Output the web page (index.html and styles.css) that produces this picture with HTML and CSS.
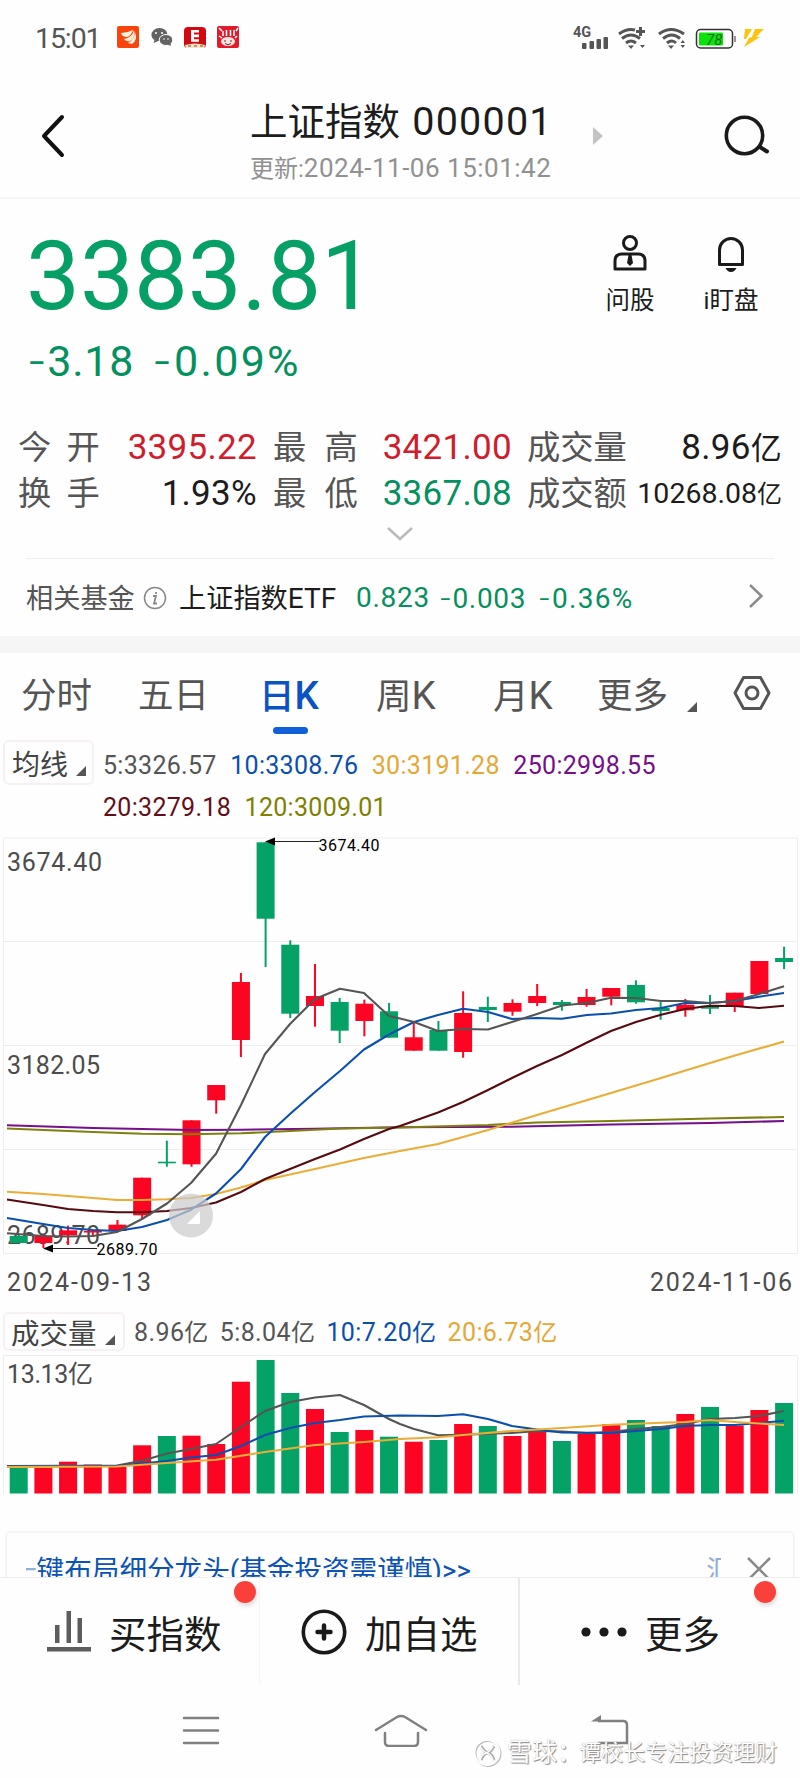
FILE: index.html
```html
<!DOCTYPE html>
<html lang="zh-CN">
<head>
    <meta charset="UTF-8">
    <title>上证指数 000001</title>
    <link rel="stylesheet" href="styles.css">
</head>
<body>
<div class="status">
    <span class="time">15:01</span>
    <svg class="apps" width="124" height="26" viewBox="116 25 124 26">
        <rect x="117" y="26" width="22" height="22" rx="2" fill="#f9440e"/>
        <path d="M121 33q6 0 12-3q-2 6-6 7q-5 0-6-4zM124 39q8-1 10-9q2 7-4 11q-4 1-6-2zM128 43q7-4 7-11q3 8-3 12z" fill="#fff3dc"/>
        <path d="M151.500 35a8 6.500 0 1 1 7 6l-5 2 1-3a7 6 0 0 1-3-5z" fill="#636363"/>
        <ellipse cx="166" cy="40" rx="6.800" ry="5.500" fill="#636363" stroke="#fff"/>
        <path d="M167 44l4 2-.5-3z" fill="#636363"/>
        <g fill="#fff"><circle cx="156" cy="33" r="1"/><circle cx="162" cy="33" r="1"/><circle cx="164" cy="39" r=".8"/><circle cx="168" cy="39" r=".8"/></g>
        <rect x="184" y="27" width="22" height="21" rx="4" fill="#d3090f"/>
        <path d="M191 30h8v2.600h-5v2h5v2.600h-5v2h5v2.600h-8z" fill="#fff"/>
        <path d="M185 45q10-3 20 0l-1 3h-18z" fill="#f7e3c4"/>
        <path d="M188 46h3M194 46h3M200 46h3" stroke="#7a4a2a"/>
        <rect x="217" y="26" width="22" height="22" rx="2" fill="#e01b2c"/>
        <path d="M223 31v5M226.500 30v6M230.500 30v6M234 30v6M219 28l3 3M238 28l-2 3M219 36l3 2M237 36l-2 2" stroke="#fff" stroke-width="1.500"/>
        <ellipse cx="228" cy="41.500" rx="7" ry="4.500" fill="#fbe3df"/>
        <path d="M224 41h2M230 41h2M225 43.500q3 2.500 6 0" stroke="#8a2020" fill="none"/>
    </svg>
    <svg class="signals" width="196" height="26" viewBox="570 25 196 26">
        <text class="net" x="573" y="37">4G</text>
        <g fill="#555">
            <rect x="582" y="43" width="4.500" height="6" rx="1"/><rect x="589.500" y="41" width="4.500" height="8" rx="1"/>
            <rect x="596.500" y="39" width="4.500" height="10" rx="1"/><rect x="603.500" y="37" width="4.500" height="12" rx="1"/>
            <path d="M628 45.500h6l-3 3.500zM668 45.500h6l-3 3.500zM640 45h5l-2.500 3zM680.500 43h4.500l-2.200-3zM680.500 45h4.500l-2.200 3z"/>
        </g>
        <g fill="none" stroke="#555" stroke-width="3">
            <path d="M619 34q8-6 16-4M622 38.500q9-7 18 0M626 43q5-4 10 0M636 31.500h9M640.500 27v9"/>
            <path d="M659 34q12-9 25 0M663 38.500q9-7 17 0M667 43q5-4 9 0"/>
        </g>
        <rect x="696.500" y="29.500" width="36" height="18.500" rx="4" fill="#fff" stroke="#333" stroke-width="1.500"/>
        <rect x="699" y="32.500" width="24" height="13" rx="1" fill="#0be30b"/>
        <path d="M735 36v6" stroke="#777" stroke-width="1.500"/>
        <text class="bat" x="706" y="45">78</text>
        <path d="M745 29h7l-6 10h-2zM755 29h9l-8 8h4l-16 10 5-9 3-1z" fill="#fcc40c"/>
    </svg>
</div>

<div class="header">
    <svg class="back" width="26" height="44" viewBox="0 0 26 44"><path d="M22 3L4 22l18 19" fill="none" stroke="#111" stroke-width="4" stroke-linecap="round" stroke-linejoin="round"/></svg>
    <div class="title">
        <h1>上证指数 <span>000001</span></h1>
        <p>更新:<span>2024-11-06 15:01:42</span></p>
    </div>
    <svg class="next" width="10" height="18" viewBox="0 0 10 18"><path d="M0 0l10 9-10 9z" fill="#c4c4c4"/></svg>
    <svg class="search" width="46" height="42" viewBox="0 0 46 42"><circle cx="20.500" cy="20.500" r="18.200" fill="none" stroke="#1a1a1a" stroke-width="3.600"/><path d="M36 32l7 4.500" stroke="#1a1a1a" stroke-width="4" stroke-linecap="round"/></svg>
</div>

<div class="quote">
    <div class="top">
        <div class="price">
            <div class="now">3383.81</div>
            <div class="change"><span><i>-</i>3.18</span><span class="pct"><i>-</i>0.09%</span></div>
        </div>
        <div class="act">
            <svg width="36" height="40" viewBox="0 0 36 40" fill="none" stroke="#1a1a1a" stroke-width="3"><circle cx="18" cy="9" r="6.500"/><path d="M3 35V27q0-7 7-7h16q7 0 7 7v8z" stroke-linejoin="round"/><path d="M16.500 21h3l1.500 8-3 3-3-3z" fill="#1a1a1a" stroke="none"/></svg>
            <span>问股</span>
        </div>
        <div class="act">
            <svg width="36" height="40" viewBox="0 0 36 40" fill="none" stroke="#1a1a1a" stroke-width="3"><path d="M6.500 30.500V16a11.500 11.500 0 0 1 23 0v14.500z" stroke-linejoin="round"/><path d="M12.500 34h11q-2 4-5.500 4t-5.500-4z" fill="#1a1a1a" stroke="none"/></svg>
            <span>i盯盘</span>
        </div>
    </div>
    <div class="stats">
        <span class="lab">今 开</span><span class="val red">3395.22</span>
        <span class="lab wide">最 高</span><span class="val red">3421.00</span>
        <span class="lab">成交量</span><span class="val">8.96<b>亿</b></span>
        <span class="lab">换 手</span><span class="val">1.93%</span>
        <span class="lab wide">最 低</span><span class="val green">3367.08</span>
        <span class="lab">成交额</span><span class="val small">10268.08<b>亿</b></span>
    </div>
    <svg class="more" width="28" height="16" viewBox="0 0 28 16"><path d="M2 2l12 11L26 2" fill="none" stroke="#bbb" stroke-width="2.500"/></svg>
    <div class="fund">
        <span class="key">相关基金</span>
        <svg width="24" height="24" viewBox="0 0 24 24"><circle cx="12" cy="12" r="10.500" fill="none" stroke="#888" stroke-width="1.500"/><path d="M10 10h3l-2 7.500h3M13 6v2" fill="none" stroke="#888" stroke-width="1.800"/></svg>
        <span class="name">上证指数<b>ETF</b></span>
        <span class="f1">0.823</span><span class="f2"><i>-</i>0.003</span><span class="f3"><i>-</i>0.36%</span>
        <svg class="go" width="16" height="26" viewBox="0 0 16 26"><path d="M2 2l11.500 11L2 24" fill="none" stroke="#8c8c8c" stroke-width="2.500"/></svg>
    </div>
</div>

<div class="tabs">
    <span>分时</span><span>五日</span><span class="on">日<b>K</b></span><span>周<b>K</b></span><span>月<b>K</b></span><span>更多</span>
    <svg class="tri" width="10" height="10" viewBox="0 0 10 10"><path d="M10 0v10H0z" fill="#555"/></svg>
    <svg class="set" width="38" height="36" viewBox="0 0 38 36" fill="none" stroke="#555" stroke-width="3"><path d="M10.500 2.500h17L36 18l-8.500 15.500h-17L2 18z" stroke-linejoin="round"/><circle cx="19" cy="18" r="6"/></svg>
</div>

<div class="ma">
    <div class="pick">均线<svg width="10" height="10" viewBox="0 0 10 10"><path d="M10 0v10H0z" fill="#555"/></svg></div>
    <div>
        <div class="vals"><span class="c5">5:3326.57</span><span class="c10">10:3308.76</span><span class="c30">30:3191.28</span><span class="c250">250:2998.55</span></div>
        <div class="vals"><span class="c20">20:3279.18</span><span class="c120">120:3009.01</span></div>
    </div>
</div>

<svg class="kline" id="kline" width="800" height="474" viewBox="0 830 800 474"></svg>

<div class="ma vol">
    <div class="pick">成交量<svg width="10" height="10" viewBox="0 0 10 10"><path d="M10 0v10H0z" fill="#555"/></svg></div>
    <div class="vals">
        <span class="c5">8.96<b>亿</b></span><span class="c5">5:8.04<b>亿</b></span><span class="c10">10:7.20<b>亿</b></span><span class="c30">20:6.73<b>亿</b></span>
    </div>
</div>

<svg class="volume" id="volume" width="800" height="143" viewBox="0 1353 800 143"></svg>

<div class="promo">
    <div class="scroll"><span class="txt"><em>一</em>键布局细分龙头(基金投资需谨慎)&gt;&gt;</span><span class="tail">汇</span></div>
    <svg width="26" height="26" viewBox="0 0 26 26"><path d="M2 2l22 22M24 2L2 24" stroke="#8a8a8a" stroke-width="2.500"/></svg>
</div>

<div class="bar">
    <div class="buy">
        <svg width="46" height="42" viewBox="0 0 46 42" fill="#5c5c5c"><rect x="9" y="14" width="4.500" height="18"/><rect x="20.500" y="0" width="4.500" height="32"/><rect x="31.500" y="7" width="4.500" height="25"/><rect x="1" y="36" width="44" height="4.500"/></svg>
        <span>买指数</span><i class="dot"></i>
    </div>
    <div class="add">
        <svg width="46" height="46" viewBox="0 0 46 46" fill="none" stroke="#1a1a1a" stroke-linecap="round"><circle cx="23" cy="23" r="20.700" stroke-width="3.600"/><path d="M23 16.500v13M16.500 23h13" stroke-width="4.500"/></svg>
        <span>加自选</span>
    </div>
    <div class="etc">
        <svg width="46" height="10" viewBox="0 0 46 10" fill="#1a1a1a"><circle cx="5" cy="5" r="4.600"/><circle cx="23" cy="5" r="4.600"/><circle cx="41" cy="5" r="4.600"/></svg>
        <span>更多</span><i class="dot"></i>
    </div>
</div>

<div class="nav">
    <svg width="38" height="30" viewBox="0 0 38 30" stroke="#808080" stroke-width="2.500" stroke-linecap="round"><path d="M2 2h34M2 14.500h34M2 27h34"/></svg>
    <svg width="54" height="34" viewBox="0 0 54 34" fill="none" stroke="#808080" stroke-width="2.500" stroke-linecap="round"><path d="M2 17L23 4q4-2 8 0l21 13M11 20v9q0 4 4 4h25q4 0 4-4v-9"/></svg>
    <svg width="40" height="32" viewBox="0 0 40 32" fill="none" stroke="#808080" stroke-width="2.500"><path d="M8 7h25q4 0 4 4v18H8"/><path d="M1 7.500L11 1v6.500z" fill="#808080" stroke="none"/></svg>
    <div class="mark">
        <svg width="30" height="30" viewBox="0 0 30 30" fill="none"><circle cx="15" cy="15.500" r="12.500" stroke="#bbb" stroke-width="2"/><circle cx="14" cy="14.500" r="12.500" stroke="#fff" stroke-width="2"/><path d="M8 8q3 6 7 7t6 7M21 8q-3 6-7 7t-6 7" stroke="#aaa" stroke-width="3"/><path d="M7 8q3 6 7 7t6 7M20 8q-3 6-7 7t-6 7" stroke="#fff" stroke-width="1.500"/></svg>
        <span class="site">雪球：</span><span>谭校长专注投资理财</span>
    </div>
</div>
<script src="chart.js"></script>
</body>
</html>
```
FILE: styles.css
```css
*{
    box-sizing: border-box;
}
body{
    margin: 0;
    width: 800px;
    height: 1778px;
    overflow: hidden;
    background-color: #fefefe;
    color: #1c1c1c;
    font-family: Roboto,"Noto Sans CJK SC",sans-serif;
}
svg{
    display: block;
    flex-shrink: 0;
}
i,em{
    font-style: normal;
}
b{
    font-weight: normal;
}
.status{
    height: 76px;
    display: flex;
    align-items: center;
    padding-left: 35px;
}
.time{
    font-size: 28.5px;
    letter-spacing: -1.1px;
    color: #555;
    width: 81px;
}
.signals{
    margin-left: 330px;
}
.net{
    font-size: 14.5px;
    font-weight: bold;
    fill: #555;
}
.bat{
    font-size: 15px;
    font-style: italic;
    fill: #146b14;
}
.header{
    height: 123px;
    display: flex;
    border-bottom: 2px solid #f5f5f5;
}
.back{
    margin: 38px 0 0 40px;
}
.title{
    margin-left: 184px;
    width: 343px;
}
h1{
    margin: 0;
    padding-top: 22px;
    font-size: 37.5px;
    font-weight: normal;
    line-height: 48px;
    word-spacing: 3px;
}
h1 span{
    font-size: 39.5px;
    letter-spacing: 1.2px;
}
.title p{
    margin: 0;
    font-size: 24px;
    line-height: 44px;
    color: #919191;
}
.title p span{
    font-size: 26px;
    letter-spacing: .5px;
}
.next{
    margin-top: 51px;
}
.search{
    margin: 39px 0 0 121px;
}
.quote{
    height: 454px;
    border-bottom: 17px solid #f6f6f6;
}
.top{
    display: flex;
    height: 226px;
}
.price{
    width: 569px;
    padding: 27px 0 0 26px;
    color: #06a066;
}
.now{
    font-size: 96px;
    line-height: 100px;
}
.change{
    display: flex;
    gap: 18px;
    padding-left: 1px;
    margin-top: 7px;
    font-size: 43px;
    line-height: 54px;
    letter-spacing: .8px;
    color: #04905f;
}
.pct{
    letter-spacing: 2.3px;
}
.change i,.fund i{
    font-family: Inter,sans-serif;
    font-weight: 300;
}
.act{
    width: 100px;
    margin-right: 1px;
    padding-top: 35px;
}
.act svg{
    margin-left: 32px;
}
.act span{
    display: block;
    margin-top: 12px;
    text-align: center;
    font-size: 24.5px;
    line-height: 30px;
}
.act:nth-child(2){
    margin-left: 11px;
}
.stats{
    display: grid;
    grid-template-columns: 90px 149px 98px 157px 110px 160px;
    grid-auto-rows: 46px;
    padding-left: 18px;
    line-height: 46px;
}
.lab{
    font-size: 33.3px;
    color: #555;
    word-spacing: 7px;
    white-space: nowrap;
}
.lab:nth-child(6n+3){
    padding-left: 16px;
}
.lab:nth-child(6n+5){
    padding-left: 15px;
}
.wide{
    word-spacing: 10px;
}
.val{
    font-size: 35px;
    text-align: right;
    letter-spacing: .3px;
    white-space: nowrap;
}
.val b{
    font-size: 31px;
}
.small{
    font-size: 28.5px;
    letter-spacing: 0;
}
.small b{
    font-size: 25px;
}
.red{
    color: #cf1d2d;
}
.green{
    color: #04905f;
}
.more{
    margin: 9px auto 0;
}
.fund{
    display: flex;
    align-items: center;
    height: 78px;
    margin: 16px 26px 0;
    border-top: 1px solid #eee;
    font-size: 27.2px;
    color: #04905f;
}
.key{
    color: #555;
    width: 117px;
    margin-bottom: 4px;
}
.name{
    color: #1c1c1c;
    margin: 0 0 4px 12px;
    width: 177px;
}
.name b,.f1,.f2,.f3{
    font-size: 28px;
}
.f1,.f2,.f3{
    letter-spacing: .7px;
}
.f1{
    width: 83px;
}
.f2{
    width: 99px;
}
.f3{
    letter-spacing: 1.3px;
}
.go{
    margin: 0 10px 3px auto;
}
.tabs{
    display: flex;
    height: 86px;
    padding-left: 21px;
    font-size: 35.5px;
    line-height: 86px;
    color: #555;
}
.tabs span{
    width: 117px;
    white-space: nowrap;
}
.tabs b{
    font-size: 38.5px;
}
.tabs span:nth-child(2){
    width: 121px;
}
.tabs .on{
    color: #0b53c4;
    font-weight: 500;
    width: 117px;
    position: relative;
}
.on b{
    font-weight: 500;
}
.tabs .on::after{
    content: "";
    position: absolute;
    left: 14px;
    top: 74px;
    width: 35px;
    height: 7px;
    border-radius: 4px;
    background-color: #1160d8;
}
.tabs span:nth-child(5){
    width: 104px;
}
.tabs span:nth-child(6){
    width: 90px;
}
.tri{
    margin-top: 49px;
}
.set{
    margin: 22px 0 0 36px;
}
.ma{
    display: flex;
    height: 91px;
    padding-left: 3px;
}
.pick{
    display: flex;
    align-items: center;
    width: 91px;
    height: 45px;
    margin-top: 1px;
    padding-left: 7px;
    border: 2px solid #f6f2f4;
    border-radius: 6px;
    font-size: 28px;
    color: #444;
    white-space: nowrap;
}
.pick svg{
    margin: 17px 0 0 8px;
}
.vals{
    display: flex;
    gap: 13.5px;
    padding: 6px 0 0 9px;
    font-size: 25px;
    line-height: 42px;
    letter-spacing: .3px;
    white-space: nowrap;
}
.vals + .vals{
    padding-top: 0;
}
.c5{
    color: #555;
}
.c10{
    color: #0b4fae;
}
.c30{
    color: #e5a836;
}
.c250{
    color: #75108a;
}
.c20{
    color: #640f18;
}
.c120{
    color: #808000;
}
.vol{
    height: 41px;
    margin-top: 7px;
}
.vol .pick{
    width: 122px;
    height: 39px;
    font-size: 28.5px;
    padding-left: 6px;
}
.vol .vals{
    gap: 11px;
    padding: 1px 0 0 9px;
    letter-spacing: .4px;
}
.vol b{
    font-size: 24px;
}
.volume{
    margin-top: 1px;
}
.axis{
    font-size: 25px;
    fill: #4c4c4c;
}
.peak{
    font-size: 16px;
    fill: #000;
}
.promo{
    display: flex;
    justify-content: space-between;
    height: 46px;
    margin: 35px 5px 0;
    padding: 23px 21px 0 19px;
    overflow: hidden;
    border: 2px solid #f5f5f5;
    border-bottom: 0;
    border-radius: 6px 6px 0 0;
    color: #0b53b4;
}
.scroll{
    display: flex;
    justify-content: space-between;
    width: 695px;
    overflow: hidden;
    font-size: 27.6px;
    line-height: 30px;
    white-space: nowrap;
}
.txt{
    margin-left: -17px;
}
.scroll em{
    opacity: .45;
}
.tail{
    width: 15px;
    overflow: hidden;
    opacity: .45;
}
.bar{
    display: flex;
    height: 107px;
    border-top: 1px solid #eee;
}
.bar div{
    display: flex;
    align-items: center;
    position: relative;
    width: 260px;
    height: 107px;
    font-size: 37.5px;
    border-right: 1px solid #f5f5f5;
}
.bar .buy{
    padding-left: 46px;
}
.bar .buy span{
    margin-left: 17px;
}
.bar .add{
    padding-left: 41px;
    border-right: 2px solid #eaeaea;
}
.bar .add span{
    margin-left: 18px;
}
.bar .etc{
    width: 280px;
    padding-left: 61px;
    border-right: 0;
}
.bar .etc span{
    margin-left: 18px;
}
.dot{
    position: absolute;
    right: 3px;
    top: 3px;
    width: 22px;
    height: 22px;
    border-radius: 50%;
    background-color: #f9403b;
    box-shadow: 1px 3px 4px #ddd;
}
.etc .dot{
    right: 24px;
}
.nav{
    position: relative;
    display: flex;
    height: 93px;
    padding: 32px 0 0 182px;
}
.nav > svg:nth-child(2){
    margin: -3px 0 0 154px;
}
.nav > svg:nth-child(3){
    margin: -2px 0 0 162px;
}
.mark{
    position: absolute;
    left: 473px;
    top: 52px;
    display: flex;
    align-items: center;
    font-size: 22px;
    line-height: 34px;
    color: #fff;
    text-shadow: 1px 1px 1px #888,0 0 1px #aaa;
    white-space: nowrap;
}
.site{
    font-size: 25px;
    margin-left: 4px;
    width: 72px;
}
```
FILE: chart.js
```js
var NS="http://www.w3.org/2000/svg";
var RED="#fb0523",GREEN="#04a267";
var step=24.69,first=18.7;

function draw(box,name,attr,text){
    var el=document.createElementNS(NS,name);
    for(var k in attr){
        el.setAttribute(k,attr[k]);
    }
    if(text){
        el.textContent=text;
    }
    box.appendChild(el);
}
function line(box,color,points){
    draw(box,"polyline",{points:points,fill:"none",stroke:color,"stroke-width":2.1,"stroke-linejoin":"round"});
}
function label(box,cls,x,y,len,text){
    draw(box,"text",{"class":cls,x:x,y:y,textLength:len},text);
}

//K线
var kline=document.getElementById("kline");
//颜色,最高,实体上,实体下,最低
var days=[
    ["g",1235,1236,1243,1243],["r",1235,1236,1243,1248],["r",1225.6,1230.3,1235.3,1245],["r",1230,1231,1232.5,1237],
    ["r",1220,1224.7,1231,1231],["r",1177.7,1177.7,1215.3,1219],["g",1140.7,1161.7,1163.3,1166.7],["r",1120.3,1120.3,1164.3,1166.7],
    ["r",1085,1085,1100.3,1113.7],["r",973,982,1040,1057],["g",842.3,842.3,918.7,967],["g",940.3,944.7,1013.7,1018],
    ["r",964,996,1006,1026.7],["g",998,1002,1030.7,1043],["r",999.7,1003.7,1021,1036.3],["g",1003,1011.3,1037.7,1037.7],
    ["r",1022.7,1037.3,1050.7,1050.7],["g",1021,1030,1050.7,1050.7],["r",991.3,1013,1052,1057.7],["g",996.7,1007,1010,1022],
    ["r",999.3,1003,1011.7,1015.7],["r",984,996,1003,1006],["g",1000,1002,1005,1010.7],["r",989,997,1005,1006.7],
    ["r",988,988,996.7,1005.3],["g",980.3,985,1002.3,1003.7],["g",1001.7,1008,1011,1019.7],["r",999,1004.7,1010.3,1016.7],
    ["g",995,1005.7,1008.7,1014],["r",992.7,992.7,1006,1012],["r",961,961,994,994],["g",946.7,958,962,969]
];
draw(kline,"rect",{x:3.5,y:838,width:794,height:415.5,fill:"none",stroke:"#eee"});
[941.5,1045.5,1149.5].forEach(function(y){
    draw(kline,"path",{d:"M4 "+y+"H797",stroke:"#eee"});
});
label(kline,"axis",7,871,95,"3674.40");
label(kline,"axis",7,1074,93,"3182.05");
label(kline,"axis",7,1244,93,"2689.70");
for(var i=0;i<days.length;i++){
    var d=days[i],x=first+i*step,c=d[0]=="r"?RED:GREEN;
    draw(kline,"rect",{x:x-1,y:d[1],width:2,height:d[4]-d[1],fill:c});
    draw(kline,"rect",{x:x-9,y:d[2],width:18,height:d[3]-d[2],fill:c});
}
line(kline,"#75108a","7,1125.3 93,1128 191,1130 241,1129.7 315,1128.7 400,1127.3 512,1126.7 611,1124.5 710,1123 784,1121");
line(kline,"#808010","7,1128.5 93,1132 142,1133.7 191,1134.3 241,1133.3 290,1131 340,1128.5 400,1127.5 488,1125 537,1122.5 611,1121 710,1118.5 784,1117");
line(kline,"#e9ad38","7,1191.7 43,1194 68,1196 93,1198 117,1200 142,1200 167,1199.3 191,1198 216,1194 241,1187.5 265,1180 315,1169 364,1158 400,1151 438,1144 488,1130 537,1115 611,1093 661,1078 710,1063 735,1055.5 784,1041.5");
line(kline,"#560a12","7,1199.5 43,1205 68,1209 93,1211 117,1212.3 142,1212.3 167,1211 191,1208 216,1202.5 241,1192 265,1179 290,1169 315,1159 340,1149.5 364,1139 389,1129 400,1126 438,1112.5 463,1102 488,1090 512,1078 537,1066 562,1055 587,1042.5 611,1031 636,1022 661,1014.7 685,1009 710,1005.7 735,1006 759,1008 784,1005.7");
line(kline,"#0b4fae","7,1218 43,1224 68,1228 93,1230 117,1231 142,1227 167,1220 191,1209.7 216,1193.5 241,1169 265,1137 290,1114 315,1092 340,1071 364,1049.5 389,1034.5 414,1022 438,1015 463,1008.7 488,1012 512,1019 537,1018 562,1018.7 587,1015 611,1013.5 636,1010 661,1008 685,1003 710,1003 735,1001 759,996.7 784,993");
line(kline,"#555","7,1233.3 43,1236 68,1236.5 93,1236 117,1232 142,1219 167,1203.5 191,1183 216,1153.7 241,1105 265,1054 290,1024 315,999 340,988.7 364,993 389,1016 400,1018.5 414,1022 438,1031 463,1029 488,1029.5 512,1022 537,1014 562,1005.5 587,1003 611,997.7 636,998 661,1001 685,1001 710,1003 735,1001 759,994 784,986.3");
//最高最低标记
draw(kline,"path",{d:"M270 841.5H319M48 1248.500H97",stroke:"#222"});
draw(kline,"path",{d:"M265 841.5l10-4v8zM43 1248.500l10-4v8z",fill:"#000"});
label(kline,"peak",318.5,851,61,"3674.40");
label(kline,"peak",96.5,1255,61,"2689.70");
//横屏按钮
draw(kline,"circle",{cx:191,cy:1215.5,r:22,fill:"#ccc","fill-opacity":0.72});
draw(kline,"path",{d:"M200 1211v13h-13z",fill:"#fff"});
label(kline,"axis",7,1291,144,"2024-09-13");
label(kline,"axis",650,1291,142,"2024-11-06");

//成交量
var volume=document.getElementById("volume");
var tops=[1468,1468,1461.7,1464.5,1467,1445.3,1436,1435.7,1444,1381.7,1360,1393,1409,1432,1430,1436.7,1441.7,1440,1424,1426,1436,1429.5,1441,1433.7,1424,1420,1426,1414,1407,1425.5,1410,1403];
draw(volume,"path",{d:"M3.5 1494V1355.5H797.5V1494",fill:"none",stroke:"#eee"});
label(volume,"axis",7,1383,86,"13.13亿");
for(var i=0;i<tops.length;i++){
    draw(volume,"rect",{x:first+i*step-9,y:tops[i],width:18,height:1493.5-tops[i],fill:days[i][0]=="r"?RED:GREEN});
}
line(volume,"#555","7,1466 117,1465.5 142,1460.7 167,1453.5 191,1449 216,1444 241,1427 265,1411 290,1402 315,1397.5 340,1395 364,1405 389,1419 400,1424 414,1429 438,1435.3 463,1434.7 512,1433 537,1431 562,1431.5 587,1433 611,1432 636,1429 661,1427 685,1424 710,1419 735,1418 759,1416 784,1411");
line(volume,"#0b4fae","7,1466.5 117,1466 167,1461 191,1457.5 216,1455 241,1446 265,1435 290,1428 315,1423 340,1420 364,1416.5 400,1415.5 438,1416 463,1414.3 488,1419 512,1426 537,1429.5 562,1432.5 611,1433 636,1431 661,1429 685,1426 710,1425 735,1425 759,1423 784,1420.7");
line(volume,"#e9ad38","7,1467 117,1466.5 167,1463 216,1459.7 265,1452 315,1445 364,1442 400,1439 438,1437.3 463,1435 512,1431 562,1428 611,1424.7 661,1422.7 685,1422 710,1420 735,1422 784,1425");
```
